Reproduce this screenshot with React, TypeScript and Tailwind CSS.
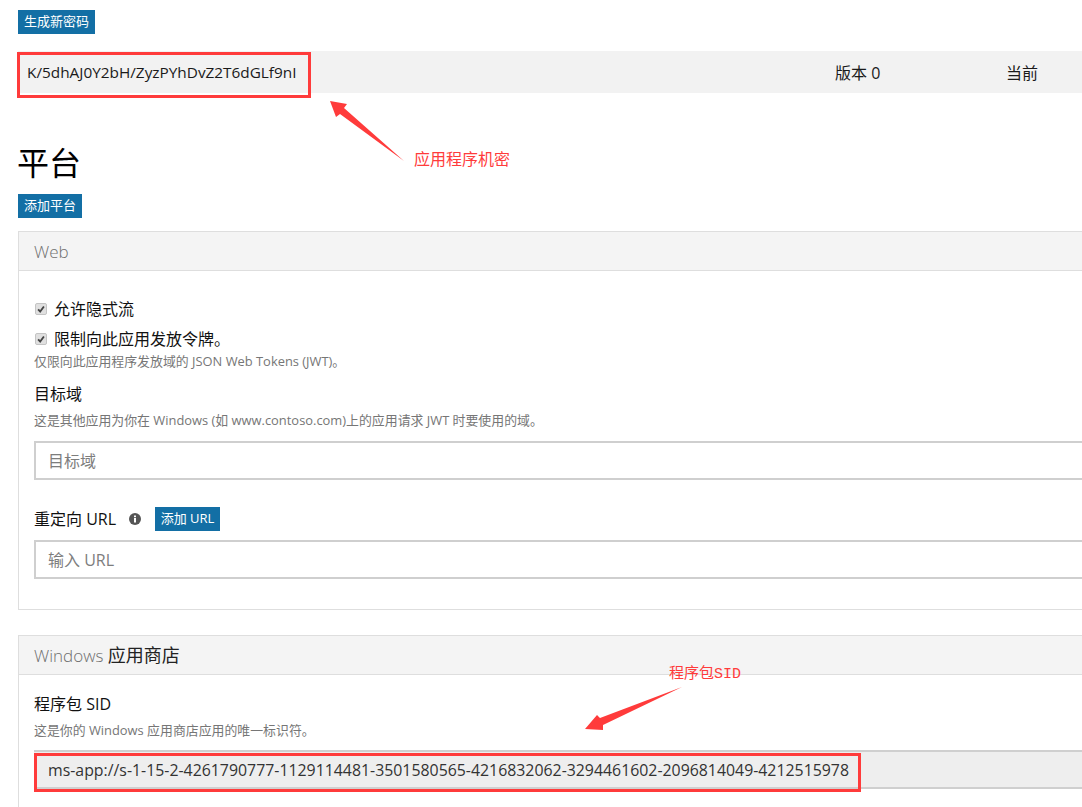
const font = "font-['Open_Sans','Noto_Sans_CJK_SC',sans-serif]"

function BlueButton({ children, className }: { children: React.ReactNode; className: string }) {
  return (
    <button type="button" className={`h-6 bg-[#136fa5] pb-[1px] text-[13px] leading-[23px] text-white text-center ${className}`}>
      {children}
    </button>
  )
}

function CheckRow({ label, className }: { label: string; className: string }) {
  return (
    <div className={`flex items-center text-[16px] text-[#111] ${className}`}>
      <span className="ml-[1px] flex h-3 w-3 items-center justify-center rounded-[2px] border border-[#c4c4c4] bg-[#e0e0e0]">
        <svg viewBox="0 0 12 12" className="h-[10px] w-[10px]">
          <path d="M2.5 6.5 L5 9 L9.5 3" fill="none" stroke="#444" strokeWidth="2.2" />
        </svg>
      </span>
      <span className="ml-[7px]">{label}</span>
    </div>
  )
}

function TextBox({ placeholder }: { placeholder: string }) {
  return (
    <div className="h-[39px] w-full border-2 border-[#cfcfcf] bg-white pl-[12px] text-[16px] leading-[37px] text-[#7d7d7d]">
      {placeholder}
    </div>
  )
}

function PanelHeader({ children, className }: { children: React.ReactNode; className: string }) {
  return (
    <div className={`h-[39px] border-b border-[#dedede] bg-[#f4f4f4] pl-[15px] text-[17px] font-light text-[#6f6f6f] ${className}`}>
      {children}
    </div>
  )
}

export default function App() {
  return (
    <div className={`relative h-[807px] w-[1082px] overflow-hidden bg-white pl-[18px] pt-[10px] ${font}`}>
      <div className="w-[1200px]">
        <BlueButton className="block w-[77px]">生成新密码</BlueButton>

        <div className="mt-[17px] flex h-[42px] items-center bg-[#f2f2f2] pt-[1px] text-[16px] text-[#1a1a1a]">
          <span className="ml-[9px] w-[808px] text-[15.35px]">K/5dhAJ0Y2bH/ZyzPYhDvZ2T6dGLf9nI</span>
          <span className="w-[171px]">版本 0</span>
          <span>当前</span>
        </div>

        <h1 className="mt-[46px] -ml-[1px] h-[48px] text-[32px] leading-[47px] font-normal text-black">平台</h1>
        <BlueButton className="mt-[7px] block w-[64px]">添加平台</BlueButton>

        <section className="mt-[13px] h-[379px] border border-[#dedede] border-r-0">
          <PanelHeader className="leading-[40px]">Web</PanelHeader>
          <div className="pl-[15px] pr-[118px]">
            <CheckRow label="允许隐式流" className="mt-[26px] h-[24px]" />
            <CheckRow label="限制向此应用发放令牌。" className="mt-[6px] h-[24px]" />
            <p className="mt-[1px] h-[18px] text-[12.9px] leading-[18px] text-[#767676]">仅限向此应用程序发放域的 JSON Web Tokens (JWT)。</p>
            <div className="mt-[12px] h-[24px] text-[16px] leading-[24px] text-[#111]">目标域</div>
            <p className="mt-[5px] h-[18px] text-[12.9px] leading-[18px] text-[#767676]">这是其他应用为你在 Windows (如 www.contoso.com)上的应用请求 JWT 时要使用的域。</p>
            <div className="mt-[12px]">
              <TextBox placeholder="目标域" />
            </div>
            <div className="mt-[27px] flex h-[24px] items-center text-[16px] text-[#111]">
              <span>重定向 URL</span>
              <svg viewBox="0 0 12 12" className="ml-[13px] h-[12px] w-[12px]">
                <circle cx="6" cy="6" r="6" fill="#555" />
                <rect x="5" y="5" width="2" height="4.5" fill="#fff" />
                <rect x="5" y="2.5" width="2" height="1.7" fill="#fff" />
              </svg>
              <BlueButton className="ml-[14px] w-[65px]">添加 URL</BlueButton>
            </div>
            <div className="mt-[9px]">
              <TextBox placeholder="输入 URL" />
            </div>
          </div>
        </section>

        <section className="mt-[25px] h-[300px] border border-[#dedede] border-r-0">
          <PanelHeader className="leading-[38px]">
            Windows <span className="text-[18px] font-normal text-[#222]">应用商店</span>
          </PanelHeader>
          <div className="pl-[15px] pr-[118px]">
            <div className="mt-[17px] h-[24px] text-[16px] leading-[24px] text-[#111]">程序包 SID</div>
            <p className="mt-[5px] h-[18px] text-[12.9px] leading-[18px] text-[#767676]">这是你的 Windows 应用商店应用的唯一标识符。</p>
            <div className="mt-[11px] h-[39px] border-y-2 border-[#cfcfcf] bg-[#eeeeee] pl-[14px] text-[15.87px] leading-[37px] text-[#333]">
              ms-app://s-1-15-2-4261790777-1129114481-3501580565-4216832062-3294461602-2096814049-4212515978
            </div>
          </div>
        </section>
      </div>

      {/* annotations drawn over the screenshot */}
      <div className="absolute left-[17px] top-[52px] h-[46px] w-[294px] border-[3px] border-[#ff3b3b]" />
      <div className="absolute left-[34px] top-[753px] h-[39px] w-[827px] border-[3px] border-[#ff3b3b]" />
      <span className="absolute left-[414px] top-[148px] text-[16px] leading-[22px] text-[#ff3b3b]">应用程序机密</span>
      <span className="absolute left-[669px] top-[664px] font-['Liberation_Mono','Noto_Sans_CJK_SC',monospace] text-[15px] leading-[22px] text-[#ff3b3b]">程序包SID</span>
      <svg viewBox="0 0 1082 807" className="pointer-events-none absolute left-0 top-0 h-[807px] w-[1082px]">
        <polygon points="330,101 336,117 340,114 404,161 344,108 347,104" fill="#ff3b3b" />
        <polygon points="585,729 597,715 600,718 682,687 603,725 603,730" fill="#ff3b3b" />
      </svg>
    </div>
  )
}
